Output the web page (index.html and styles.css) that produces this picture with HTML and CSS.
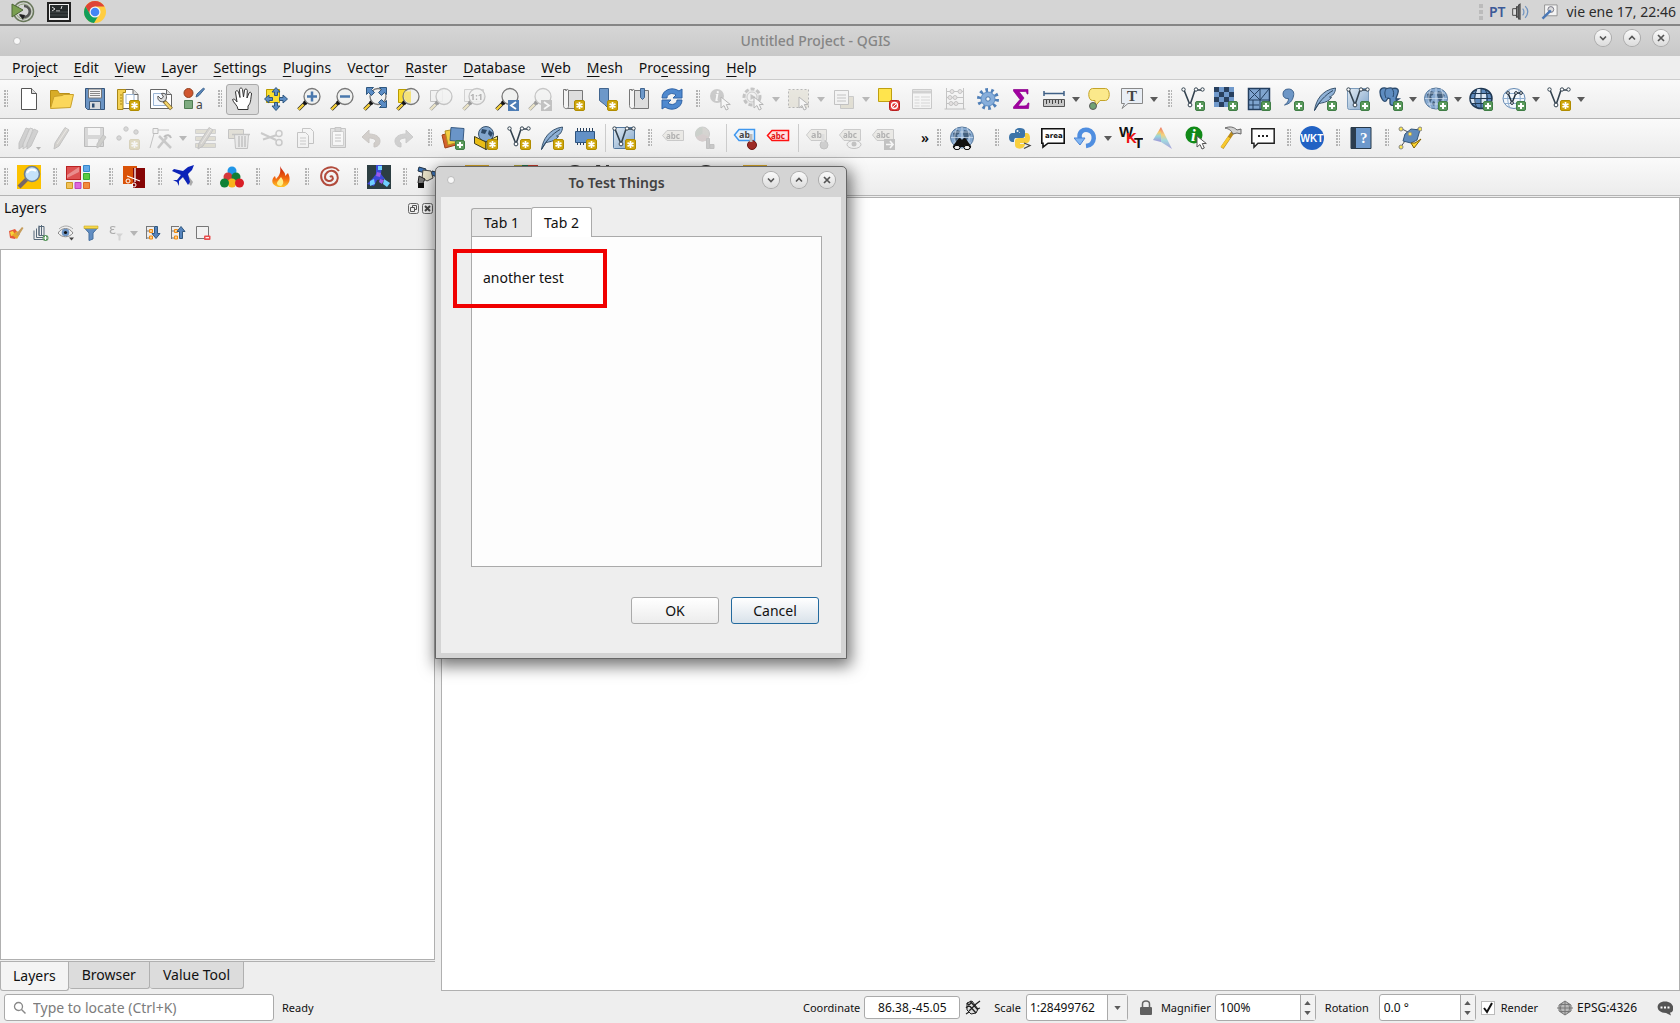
FILE: index.html
```html
<!DOCTYPE html>
<html lang="en">
<head>
<meta charset="utf-8">
<title>Untitled Project - QGIS</title>
<link rel="stylesheet" href="styles.css">
</head>
<body>
<svg class="defs" aria-hidden="true">
<defs>
<linearGradient id="gBlue" x1="0" y1="0" x2="1" y2="1"><stop offset="0" stop-color="#e4edf5"/><stop offset="1" stop-color="#7ea3c9"/></linearGradient>
<linearGradient id="gFire" x1="0" y1="0" x2="0" y2="1"><stop offset="0" stop-color="#c41708"/><stop offset=".6" stop-color="#f26a10"/><stop offset="1" stop-color="#ffc629"/></linearGradient>
<linearGradient id="gRain" x1="0" y1="0" x2="0" y2="1"><stop offset="0" stop-color="#e84030"/><stop offset=".35" stop-color="#f6c245"/><stop offset=".6" stop-color="#7fd0d8"/><stop offset="1" stop-color="#8a7bd0"/></linearGradient>
<g id="lens"><path d="M9 15l-7.500 7.500" stroke="#222" stroke-width="3.600"/><path d="M6.500 17.500l-5 5" stroke="#f5cf3a" stroke-width="2.400"/><path d="M9.500 14.500l-2 2" stroke="#111" stroke-width="4"/><circle cx="15" cy="9.500" r="8" fill="#eef0ee" fill-opacity=".85" stroke="#777" stroke-width="1.300"/></g>
<g id="plus"><rect x="14.500" y="14.500" width="9" height="9" rx="1.500" fill="#5a9a5c" stroke="#3f7d45"/><path d="M19 16v6M16 19h6" stroke="#fff" stroke-width="2"/></g>
<g id="star"><rect x="13.500" y="13.500" width="10" height="10" rx="1.500" fill="#cfa70c" stroke="#b08c00"/><path d="M18.500 15v7M15.500 16.700l6 3.600M21.500 16.700l-6 3.600" stroke="#fff" stroke-width="1.700"/></g>
<g id="vee"><path d="M3 3l6 15 5-15h7" fill="none" stroke="#33424f" stroke-width="1.600"/><g fill="#fff" stroke="#33424f"><circle cx="2.500" cy="2.500" r="1.700"/><circle cx="9" cy="18" r="1.900"/><circle cx="15" cy="2.500" r="1.700"/><circle cx="21.500" cy="2.500" r="1.700"/></g></g>
<g id="pointer"><path d="M12 10v11l3-2.500 2 4.500 2.300-1-2-4.500h4z" fill="#fff" stroke="#555"/></g>
<g id="feather"><path d="M1.500 23.500C3 13 9 3 22.500 1c0 5-3 8-6 9l2 .5c-2 3-6 5-10 5.500L6 16.500z" fill="#8fb1d6" stroke="#39536d"/><path d="M1.500 23.500C5 16 12 8 20 3.500" stroke="#2f4962" fill="none"/></g>
<g id="globe"><ellipse cx="12" cy="11.500" rx="11.500" ry="10.500" fill="#86a9d0" stroke="#58799c"/><path d="M3 7l4-3 3 1-1 3-2 1 1 3-2 4-2-4zM14 4l4 1 3 4-2 1-2 4-2 2-1-5-1-3zM9 14l2 1-1 4-2-2z" fill="#44607e"/><path d="M1 11.500h22M3 6h18M3 17h18M12 1v21M7 2c-3 6-3 13 0 19M17 2c3 6 3 13 0 19" stroke="#d5e3f0" stroke-width=".7" fill="none"/></g>
<g id="pencil"><path d="M5 17L15 1.500l4 2.500L9 20l-5 3z" fill="#aaa08c" stroke="#777"/><path d="M7 18L17 3" stroke="#ded6c4"/></g>
</defs>
<symbol id="new" viewBox="0 0 24 24"><path d="M4.500 1.500h10l5 5v16h-15z" fill="#fff" stroke="#555"/><path d="M14.500 1.500v5h5" fill="#ddd" stroke="#555"/></symbol>
<symbol id="open" viewBox="0 0 24 24"><path d="M.5 20.500v-17h7l2 3h10v3" fill="#d8ac27" stroke="#b98f17"/><path d="M.5 21.500L4 9.500l8-1 2-1h9.500l-3 13z" fill="#fbd75b" stroke="#c9a02a"/></symbol>
<symbol id="save" viewBox="0 0 24 24"><path d="M2.500 1.500h19v21h-17l-2-2z" fill="#6b94c4" stroke="#35557c"/><path d="M5.500 2h13v9h-13z" fill="#f3f3f3" stroke="#777"/><path d="M7 4.500h10M7 6.500h10M7 8.500h10" stroke="#888"/><path d="M6.500 14.500h11v8h-11z" fill="#d7dadd" stroke="#45607f"/><path d="M9 16.500h2.500v4H9z" fill="#2c4c70"/></symbol>
<symbol id="layout" viewBox="0 0 24 24"><path d="M4 2.500h13l5 5v14H4z" fill="#fff" stroke="#666"/><path d="M17 2.500v5h5" fill="#ddd" stroke="#666"/><path d="M10 7.500h8v9h-8z" fill="none" stroke="#9bb5d4"/><path d="M1.500 2.500h8v3H7v17H1.500z" fill="#f3d155" stroke="#a88718"/><path d="M4 8h2M4 11h2M4 14h2M4 17h2" stroke="#a88718"/><use href="#star"/></symbol>
<symbol id="manager" viewBox="0 0 24 24"><path d="M1.500 2.500h16l5 5v14h-21z" fill="#fff" stroke="#666"/><path d="M17.500 2.500v5h5" fill="#ddd" stroke="#666"/><path d="M4.500 6.500h12v12h-12z" fill="#f5f9ff" stroke="#9bb5d4"/><path d="M15 14l7.500 8" stroke="#876c2c" stroke-width="4"/><path d="M16 15l6 6.500" stroke="#f4d56a" stroke-width="2.500"/><path d="M9 9l3 3 2.500-2-2-3.500c4-1 6 2 4.500 6l-2 2c-4 1-7-1.500-6-5.500z" fill="#ddd" stroke="#555"/></symbol>
<symbol id="hand" viewBox="0 0 24 24"><path d="M7 22.500c0-4-5-7-5.500-10 1.500-1 3 0 4.500 2.500L4.500 5C5 3 7 3.500 7.500 5L9 10.500 8.500 2.500C9 .5 11 .5 11.500 2.500L12.500 10l1-7c.5-1.500 2.500-1.500 2.800.5L16 11l2-5c1-1.500 2.700-.5 2.500 1-1 6-.5 9-3.500 12v3.500z" fill="#fff" stroke="#333"/></symbol>
<symbol id="panto" viewBox="0 0 24 24"><path d="M2.500 2.500h13v13h-13z" fill="#fbdf2f" stroke="#b89b00"/><g fill="#5b8cc4" stroke="#2f577f"><path d="M12 .5l4 4.500h-2.500v3.500h-3V5H8zM12 23.500l4-4.500h-2.500v-3.500h-3V19H8zM.5 12L5 8v2.500h3.500v3H5V16zM23.500 12L19 8v2.500h-3.500v3H19V16z"/></g></symbol>
<symbol id="zin" viewBox="0 0 24 24"><use href="#lens"/><path d="M15 4.500v10M10 9.500h10" stroke="#4a78ad" stroke-width="2.500"/></symbol>
<symbol id="zout" viewBox="0 0 24 24"><use href="#lens"/><path d="M10 9.500h10" stroke="#4a78ad" stroke-width="2.500"/></symbol>
<symbol id="zfull" viewBox="0 0 24 24"><use href="#lens"/><g fill="#5b8cc4" stroke="#2f577f"><path d="M3.500.5h7l-2 2 3 3-3 3-3-3-2 2zM23.500.5h-7l2 2-3 3 3 3 3-3 2 2zM23.500 20.500h-7l2-2-3-3 3-3 3 3 2-2z"/></g></symbol>
<symbol id="zsel" viewBox="0 0 24 24"><path d="M2.500 2.500h12v13h-12z" fill="#f9dc35" stroke="#b89b00"/><use href="#lens"/><path d="M9 4.500h6v11h-3c-4-2-5-7-3-11z" fill="#f4e27a"/></symbol>
<symbol id="zlayer" viewBox="0 0 24 24"><path d="M1.500 3.500h12v11h-12z" fill="#eee" stroke="#777"/><use href="#lens"/></symbol>
<symbol id="zlast" viewBox="0 0 24 24"><use href="#lens"/><path d="M13 13h11v11H13z" fill="#4d7db5"/><path d="M21 15l-5 3.500 5 3.500" stroke="#fff" stroke-width="1.800" fill="none"/></symbol>
<symbol id="znext" viewBox="0 0 24 24"><use href="#lens"/><path d="M13 13h11v11H13z" fill="#777"/><path d="M16 15l5 3.500-5 3.500" stroke="#fff" stroke-width="1.800" fill="none"/></symbol>
<symbol id="mapview" viewBox="0 0 24 24"><path d="M5 3.500h16.500v18H5z" fill="#dedede" stroke="#777"/><path d="M5 2.500H2.500v16c0 4 5 4 5 1v-16C7.500 2 5 2 5 4z" fill="#f4f4f4" stroke="#777"/><use href="#star"/></symbol>
<symbol id="bookmark" viewBox="0 0 24 24"><path d="M5.500 1.500h9v20l-4-4-5-4z" fill="#6d98c9" stroke="#41658f"/><use href="#star"/></symbol>
<symbol id="bookmarks" viewBox="0 0 24 24"><path d="M5 3.500h16.500v18H5z" fill="#dedede" stroke="#777"/><path d="M5 2.500H2.500v16c0 4 5 4 5 1v-16C7.500 2 5 2 5 4z" fill="#f4f4f4" stroke="#777"/><path d="M13.500 1.500h4v9l-2 2-2-2z" fill="#6d98c9" stroke="#41658f"/></symbol>
<symbol id="refresh" viewBox="0 0 24 24"><path d="M2 11C2 3 12-1 19 4l3-2v9h-9l3-3c-4-3-9-1-9 3z" fill="#4f89cf" stroke="#2e62a5"/><path d="M22 13c0 8-10 12-17 7l-3 2v-9h9l-3 3c4 3 9 1 9-3z" fill="#4f89cf" stroke="#2e62a5"/></symbol>
<symbol id="action" viewBox="0 0 24 24"><circle cx="10" cy="10" r="8" fill="#ddd" stroke="#777" stroke-width="3" stroke-dasharray="4 2"/><circle cx="10" cy="10" r="5" fill="#eee" stroke="#888"/><path d="M8.500 7v6l5-3z" fill="#777"/><use href="#pointer"/></symbol>
<symbol id="select" viewBox="0 0 24 24"><path d="M1.500 2.500h20v18h-20z" fill="#d8cfa6" stroke="#555" stroke-dasharray="2 2"/><use href="#pointer"/></symbol>
<symbol id="selform" viewBox="0 0 24 24"><path d="M8.500 9.500h13v12h-13z" fill="#cfc18a" stroke="#888"/><path d="M2.500 3.500h14v14h-14z" fill="#f3f3f3" stroke="#777"/><path d="M5 8h9M5 11h9M5 14h9" stroke="#777"/></symbol>
<symbol id="deselect" viewBox="0 0 24 24"><path d="M1.500 1.500h13v13h-13z" fill="#ffe44d" stroke="#bfa010"/><rect x="12.500" y="13.500" width="10" height="10" rx="2" fill="#e23d3d" stroke="#b81d1d"/><circle cx="17.500" cy="18.500" r="3" fill="none" stroke="#fff" stroke-width="1.300"/><path d="M15.500 20.500l4-4" stroke="#fff"/></symbol>
<symbol id="table" viewBox="0 0 24 24"><path d="M2.500 2.500h19v19h-19z" fill="#fafafa" stroke="#888"/><path d="M3 5h18" stroke="#999" stroke-width="3"/><path d="M4.500 10h5M11 10h9M4.500 13h5M11 13h9M4.500 16h5M11 16h9M4.500 19h5M11 19h9" stroke="#aaa"/></symbol>
<symbol id="abacus" viewBox="0 0 24 24"><path d="M3.500 1v21M20.500 1v21M1.500 22h21M4 4.500h16M4 10.500h16M4 16.500h16" stroke="#777" fill="none"/><g fill="#d5c5c5" stroke="#777"><circle cx="9" cy="4.500" r="2"/><circle cx="17" cy="4.500" r="2"/><circle cx="7" cy="10.500" r="2"/><circle cx="12" cy="10.500" r="2"/><circle cx="8" cy="16.500" r="2"/><circle cx="13" cy="16.500" r="2"/></g></symbol>
<symbol id="gear" viewBox="0 0 24 24"><circle cx="12" cy="12" r="9" fill="none" stroke="#4f7fb8" stroke-width="4" stroke-dasharray="2.600 3.050"/><circle cx="12" cy="12" r="7" fill="#87aedb" stroke="#5c8cc2"/><circle cx="12" cy="12" r="2.200" fill="#f5f5f5" stroke="#4878ae"/></symbol>
<symbol id="sigma" viewBox="0 0 24 24"><path d="M4.500 2.500h14.500v4.500h-1c0-2-1-2.500-3-2.500h-5L15 11l-6 8h6c2 0 3.500-1 4-3h1l-.5 5.500h-15v-1.500L11 12.500 4.500 4z" fill="#a100a1" stroke="#8a008a" stroke-width=".7"/></symbol>
<symbol id="measure" viewBox="0 0 24 24"><path d="M2 6.500h20M2 4v5M22 4v5" stroke="#3e5f85" stroke-width="1.500"/><path d="M1.500 12.500h21v7h-21z" fill="#c8c8c8" stroke="#555"/><path d="M4.500 13v4M7.500 13v3M10.500 13v4M13.500 13v3M16.500 13v4M19.500 13v3" stroke="#444"/></symbol>
<symbol id="tips" viewBox="0 0 24 24"><path d="M5.500 1.500h13c5 0 5 12 0 12H13l-5 6v-6H5.500c-5 0-5-12 0-12z" fill="#fbe98b" stroke="#c4a42a"/><circle cx="6" cy="19" r="3.500" fill="#71a174" stroke="#5b5b5b"/></symbol>
<symbol id="addvec" viewBox="0 0 24 24"><use href="#vee"/><use href="#plus"/></symbol>
<symbol id="newvec" viewBox="0 0 24 24"><use href="#vee"/><use href="#star"/></symbol>
<symbol id="addras" viewBox="0 0 24 24"><path d="M0 0h20v20H0z" fill="#7099cb"/><path d="M0 0h5v5H0zM10 0h5v5h-5zM5 5h5v5H5zM15 5h5v5h-5zM10 10h5v5h-5zM0 10h5v5H0zM5 15h5v5H5z" fill="#28405f"/><use href="#plus"/></symbol>
<symbol id="addmesh" viewBox="0 0 24 24"><path d="M1.500 1.500h21v21h-21z" fill="#7fa4cf" stroke="#243f5f" stroke-width="1.500"/><path d="M13 1v22M1 13h22M2 2l11 11M13 2L2 13M22 2L13 13M1 18h11M6 13v10" stroke="#243f5f"/><use href="#plus"/></symbol>
<symbol id="addcsv" viewBox="0 0 24 24"><path d="M8.500 2c4 0 6 3 5 7-1 5-4 8-9 9 3-2 4-4 4-6.500C5 12 3 10 3 7c0-3 2-5 5.500-5z" fill="#6d96c6" stroke="#41658f"/><use href="#plus"/></symbol>
<symbol id="addlite" viewBox="0 0 24 24"><use href="#feather"/><use href="#plus"/></symbol>
<symbol id="newlite" viewBox="0 0 24 24"><use href="#feather"/><use href="#star"/></symbol>
<symbol id="addvirt" viewBox="0 0 24 24"><rect x="1.500" y="1.500" width="21" height="21" rx="2" fill="url(#gBlue)" stroke="#7d9cbc"/><use href="#vee"/><use href="#plus"/></symbol>
<symbol id="newvirt" viewBox="0 0 24 24"><rect x="1.500" y="1.500" width="21" height="21" rx="1" fill="url(#gBlue)" stroke="#53779d"/><use href="#vee"/><use href="#star"/></symbol>
<symbol id="addpg" viewBox="0 0 24 24"><path d="M1 5c0-4 4-5 7-3.500C11 .5 13 1 14 1.500c4-1 6 1 5 4-.5 3-2 4.500-2 6.500h3l-3 2-1 3c-1 2-5 2-5-1v-4l-2-1-2 3c-3 2-6-5-6-9z" fill="#5e8cc0" stroke="#29496c" stroke-width="1.300"/><path d="M7 2c-2 4-1 6 0 9M13 2c2 2 2 5 1 8" stroke="#29496c" fill="none"/><use href="#plus"/></symbol>
<symbol id="addwms" viewBox="0 0 24 24"><use href="#globe"/><use href="#plus"/></symbol>
<symbol id="addwcs" viewBox="0 0 24 24"><ellipse cx="12" cy="11.500" rx="11" ry="10" fill="#5e8abc" stroke="#1f3853" stroke-width="1.500"/><path d="M7 7h10v4.500H6zM1.500 12H6l1 4.500H3zM12 12h5v4.500h-5zM8 2h4v4.500H7z" fill="#d8e5f3"/><path d="M1 11.500h22M3 6.500h18M3 16.500h18M12 2v19M8 2c-3 6-3 13 0 19M16 2c3 6 3 13 0 19" stroke="#1f3853" fill="none"/><use href="#plus"/></symbol>
<symbol id="addwfs" viewBox="0 0 24 24"><ellipse cx="12" cy="11.500" rx="11" ry="10" fill="#f2f7fc" stroke="#6489b2"/><path d="M1 11.500h22M3 6.500h18M3 16.500h18M8 2c-3 6-3 13 0 19M16 2c3 6 3 13 0 19" stroke="#91afd0" fill="none"/><path d="M6 6l4 10 4-10h5" stroke="#1f2e3c" stroke-width="1.500" fill="none"/><g fill="#fff" stroke="#1f2e3c"><circle cx="6" cy="6" r="1.400"/><circle cx="10" cy="16" r="1.400"/><circle cx="14" cy="6" r="1.400"/><circle cx="19" cy="6" r="1.400"/></g><use href="#plus"/></symbol>
<symbol id="edits" viewBox="0 0 24 24"><path d="M2 17L9 2l3 1-6 17-4 3z" fill="#999" stroke="#777"/><path d="M6 18L13 2l3 1-6 17-4 3z" fill="#bbb" stroke="#777"/><path d="M10 18L17 3l4 2-7 15-4 3z" fill="#999" stroke="#777"/><path d="M19 21h5l-2.500 3z" fill="#555"/></symbol>
<symbol id="edit" viewBox="0 0 24 24"><use href="#pencil"/></symbol>
<symbol id="saveedit" viewBox="0 0 24 24"><path d="M1.500 1.500h19v19h-19z" fill="#aaa" stroke="#666"/><path d="M5 2h12v7H5zM5 13h10v7H5z" fill="#f4f4f4"/><path d="M14 18l6-9 3 2-6 9-3 2z" fill="#998" stroke="#777"/></symbol>
<symbol id="addpt" viewBox="0 0 24 24"><g fill="#aaa" stroke="#777"><circle cx="3" cy="12" r="2.200"/><circle cx="10" cy="3" r="2.200"/><circle cx="20" cy="6" r="2.200"/></g><g opacity=".8"><use href="#star"/></g></symbol>
<symbol id="vertex" viewBox="0 0 24 24"><path d="M1 22L6 4h14" stroke="#777" fill="none"/><path d="M4 2.500h5v5H4z" fill="#eee" stroke="#666"/><path d="M9 22l9-11M22 22L10 10" stroke="#888" stroke-width="2.500"/><path d="M15 11c3-3 6-2 7 1" stroke="#666" stroke-width="2" fill="none"/></symbol>
<symbol id="multi" viewBox="0 0 24 24"><path d="M1.500 3.500h20v4h-20zM1.500 10.500h20v4h-20zM1.500 17.500h20v4h-20z" fill="#c9bd83" stroke="#999"/><use href="#pencil"/></symbol>
<symbol id="trash" viewBox="0 0 24 24"><path d="M1.500 3.500h15v9h-15z" fill="#c9bd93" stroke="#777"/><path d="M7.500 8.500h14l-1 14h-12z" fill="#ddd" stroke="#777"/><path d="M5 8.500h18M12 10v11M15 10v11M18 10v11" stroke="#777" stroke-width="1.500"/></symbol>
<symbol id="cut" viewBox="0 0 24 24"><path d="M1 7l15 7M3 13.500L17 9" stroke="#888" stroke-width="2"/><circle cx="19" cy="7.500" r="3" fill="none" stroke="#888" stroke-width="1.500"/><circle cx="19" cy="16.500" r="3" fill="none" stroke="#888" stroke-width="1.500"/></symbol>
<symbol id="copy" viewBox="0 0 24 24"><path d="M9.500 2.500h8l3 3v12h-11z" fill="#f4f4f4" stroke="#777"/><path d="M4.500 6.500h8l3 3v12h-11z" fill="#f4f4f4" stroke="#777"/><path d="M7 12h6M7 15h6M7 18h6" stroke="#888"/></symbol>
<symbol id="paste" viewBox="0 0 24 24"><path d="M4.500 2.500h15v19h-15z" fill="#ccc" stroke="#777"/><path d="M6.500 5.500h11v14h-11z" fill="#fff" stroke="#999"/><path d="M9 1.500h6v4H9z" fill="#aaa" stroke="#777"/><path d="M9 9h6M9 12h6M9 15h6" stroke="#777"/></symbol>
<symbol id="undo" viewBox="0 0 24 24"><path d="M3 11l7-7v4c7 0 11 3 11 7s-3 6-6 6v-4c3-1 2-5-5-5v5z" fill="#a79381" stroke="#8f7e70"/></symbol>
<symbol id="redo" viewBox="0 0 24 24"><path d="M21 11l-7-7v4c-7 0-11 3-11 7s3 6 6 6v-4c-3-1-2-5 5-5v5z" fill="#999" stroke="#888"/></symbol>
<symbol id="dsm" viewBox="0 0 24 24"><path d="M1 9l10-3 4 13-11 3z" fill="#d5632c" stroke="#9b4118"/><path d="M4 5l11-2 3 13-11 3z" fill="#f2cf43" stroke="#b0901f"/><path d="M10 1.500l13 1-1 13-13-1z" fill="#6a95c8" stroke="#385b84"/><use href="#plus"/></symbol>
<symbol id="gpkg" viewBox="0 0 24 24"><circle cx="12" cy="8" r="7.500" fill="#83a6cd" stroke="#38536e"/><path d="M8 3l5 1-2 4-4-1zM15 4l4 3-2 4-3-3z" fill="#2d4865"/><path d="M.5 10.500L12 16v7.500l-11.500-6z" fill="#e9bd16" stroke="#3b3b20"/><path d="M12 16l11.500-6v8L12 23.500z" fill="#fbe660" stroke="#3b3b20"/><use href="#star"/></symbol>
<symbol id="chip" viewBox="0 0 24 24"><path d="M4.500 2v17M7.500 2v17M10.500 2v17M13.500 2v17M16.500 2v17M19.500 2v17" stroke="#243e5c"/><path d="M2.500 5.500h19v11h-19z" fill="#6290c6" stroke="#2f5580"/><use href="#star"/></symbol>
<symbol id="diag" viewBox="0 0 24 24"><circle cx="8.500" cy="8" r="7" fill="#a7a08f" stroke="#888"/><path d="M8.500 8V1A7 7 0 0 0 2 11z" fill="#7f9a80"/><path d="M8.500 8L2 11a7 7 0 0 0 13 0z" fill="#b98f8f"/><path d="M12.500 12.500h3v10h-3zM16 18.500h4v4h-4z" fill="#888" stroke="#777"/></symbol>
<symbol id="metasearch" viewBox="0 0 24 24"><use href="#globe"/><path d="M8 13c1-2 3-1 4 1 1-2 3-3 4-1l5 7c1 3-5 5-7 1h-4c-2 4-8 2-7-1z" fill="#111"/><ellipse cx="7" cy="21.500" rx="3" ry="2.200" fill="#eee" stroke="#000"/><ellipse cx="17" cy="21.500" rx="3" ry="2.200" fill="#eee" stroke="#000"/></symbol>
<symbol id="python" viewBox="0 0 24 24"><path d="M7 10V5c0-4 10-4 10 0v4c0 3-2 3-4 3H8c-2 0-2 2-2 4H4c-4 0-4-9 0-9h8V6z" fill="#3d74a8"/><path d="M17 12V7h2c4 0 4 10 0 10h-7v1h5c0 6-10 6-10 1v-4c0-2 2-3 4-3z" fill="#f8cf3e"/><circle cx="9.500" cy="5" r="1" fill="#fff"/><path d="M16 17l6 2.500-6 3" stroke="#444" fill="none" stroke-width="1.300"/></symbol>
<symbol id="rotate" viewBox="0 0 24 24"><path d="M6 13C4 6 9 3 14 4c8 2 8 15-2 16" stroke="#4f8ee0" stroke-width="4.500" fill="none"/><path d="M0 12h11l-5 7z" fill="#80b5f2" stroke="#4a84d5"/></symbol>
<symbol id="prism" viewBox="0 0 24 24"><path d="M9 1L1 14l8 2z" fill="url(#gRain)" opacity=".8"/><path d="M9 1l11 22-11-7z" fill="url(#gRain)" opacity=".7"/></symbol>
<symbol id="hammer" viewBox="0 0 24 24"><path d="M4 22L15 6" stroke="#b98a1c" stroke-width="3.500"/><path d="M4 21.500l7-10" stroke="#f8c92f" stroke-width="3"/><path d="M7 2c5-2 9-1 12 2l4-1v5l-4-1-4 1c-2-4-4-5-8-6z" fill="#d2d2d2" stroke="#666"/></symbol>
<symbol id="dots" viewBox="0 0 24 24"><path d="M.8 2.800h22.400v14.400H7l-4 4v-4H.8z" fill="#fff" stroke="#222" stroke-width="1.500"/><path d="M7 10h2M11 10h2M15 10h2" stroke="#222" stroke-width="2"/></symbol>
<symbol id="topo" viewBox="0 0 24 24"><path d="M2 2l10 5L22 2M2 22L12 8l9-5" stroke="#555" fill="none"/><path d="M7 8l6-5 9 1-3 10-6 3-8-2z" fill="#5e8abb" stroke="#34577c"/><g fill="#fde84e" stroke="#888"><circle cx="3" cy="3" r="2"/><circle cx="22" cy="3" r="2"/><circle cx="12" cy="8" r="2"/><circle cx="3" cy="21" r="2"/></g><path d="M13 17l3 5 7-9-6 4z" fill="#ffd72e" stroke="#7d5e00"/></symbol>
<symbol id="p1" viewBox="0 0 24 24"><path d="M0 0h24v24H0z" fill="#fcc200"/><path d="M10 14l-8 8" stroke="#766" stroke-width="4"/><circle cx="15" cy="9" r="7.500" fill="#c5e2fb" stroke="#71808f" stroke-width="1.600"/><path d="M10 8c2-4 6-4 9-2" stroke="#fff" stroke-width="2" fill="none"/></symbol>
<symbol id="p2" viewBox="0 0 24 24"><rect x=".5" y="1.500" width="14" height="13" fill="#dd5151" stroke="#b22"/><path d="M17.500.5h6v6h-6z" fill="#63a8e8" stroke="#38c"/><path d="M17.500 8.500h6v6h-6z" fill="#5bcb40" stroke="#3a3"/><path d="M.5 17.500h6v6h-6z" fill="#f1c157" stroke="#c92"/><path d="M9 17.500h6v6H9z" fill="#dd69dd" stroke="#b4b"/><path d="M17.500 17.500h6v6h-6z" fill="#f18a3c" stroke="#d62"/><path d="M1 10L13 2v5L1 13z" fill="#fff" opacity=".35"/></symbol>
<symbol id="p3" viewBox="0 0 24 24"><path d="M1 1h14v18H1z" fill="#da5207"/><path d="M11 3h12v20H11z" fill="#860505"/><path d="M13 3v14M5 11l13 5" stroke="#fff" stroke-width="1.300"/><circle cx="6" cy="16" r="2" stroke="#fff" fill="none"/><circle cx="12" cy="20" r="2" stroke="#fff" fill="none"/></symbol>
<symbol id="p4" viewBox="0 0 24 24"><path d="M9 10l11 11 2-4-6-8z" fill="#aaa"/><path d="M1 6l2-2 9 2 5-4 6-2-2 5-4 4 2 8-2 3-5-8-4 4v5l-2-4-4-2h4l4-5z" fill="#0c23b8"/></symbol>
<symbol id="p5" viewBox="0 0 24 24"><circle cx="12" cy="6" r="4.500" fill="#2196e8"/><circle cx="8" cy="12" r="4.500" fill="#d5383a"/><circle cx="16" cy="12" r="4.500" fill="#127d35"/><circle cx="12" cy="18" r="4.500" fill="#f9b31a"/><circle cx="4.500" cy="18" r="4.500" fill="#108236"/><circle cx="19.500" cy="18" r="4.500" fill="#d91f26"/></symbol>
<symbol id="p6" viewBox="0 0 24 24"><path d="M11 1c2 5 6 6 5 10l3-3c3 6 2 11-4 14H9C2 20 2 14 6 11l1 3c4-4 5-7 4-13z" fill="url(#gFire)"/><path d="M12 12c3 4 3 7 0 9-4 0-5-3-3-5z" fill="#fff08a"/></symbol>
<symbol id="p7" viewBox="0 0 24 24"><path d="M12 12c2-2 4 1 2 3s-7 1-7-3 4-7 8-6 6 6 4 10-9 6-13 2-4-11 1-14 11-2 14 2" fill="none" stroke="#b24b3c" stroke-width="2"/></symbol>
<symbol id="p8" viewBox="0 0 24 24"><path d="M0 0h24v24H0z" fill="#2c3e42"/><path d="M9 0h6l-1 9 4 5-8 1-3 6-7-2 6-6 3-4z" fill="#3b49d8"/><path d="M11 1h4v4h-4zM3 16l4-2 1 5-5 2zM17 14l6 4-3 4-4-3z" fill="#6fd0ff"/><path d="M10 7l4 1-1 4-4-1zM13 14l4 1-2 4-3-2z" fill="#9a5be8"/></symbol>
<symbol id="p9" viewBox="0 0 24 24"><path d="M3 2l7 2-1 4-7-2zM16 6l7 2-1 4-7-2z" fill="#3c74b8" stroke="#234"/><path d="M7 5l8 1 2 7-6 3-5-3z" fill="#e8e2c8" stroke="#444"/><path d="M3 11l6 3-3 6-4-2z" fill="#777" stroke="#222"/><path d="M2 18h6v5H2z" fill="#111"/></symbol>
<symbol id="p10" viewBox="0 0 24 24"><path d="M0 0h24v24H0z" fill="#d9a929"/></symbol>
<symbol id="p11" viewBox="0 0 24 24"><path d="M0 0h8v24H0z" fill="#b2a43c"/><path d="M8 0h6v24H8z" fill="#27724a"/><path d="M14 0h10v24H14z" fill="#c43b2a"/></symbol>
<symbol id="p12" viewBox="0 0 24 24"><circle cx="12" cy="12" r="12" fill="#333"/></symbol>
<symbol id="p13" viewBox="0 0 24 24"><path d="M0 0h4l3 8H2zM10 0h3v8h-3z" fill="#444"/></symbol>
<symbol id="l1" viewBox="0 0 16 16"><path d="M1 6l6-2 4 5-4 5-5-1z" fill="#e55a3c"/><path d="M2 7l3-1 2 4-4 1z" fill="#f9d53b"/><path d="M4 10l5 4 3-5-3-3z" fill="#e8a82b"/><path d="M8 9l6-7 1.500 1-5 8z" fill="#c69d5c"/></symbol>
<symbol id="l2" viewBox="0 0 16 16"><path d="M1 5.500v9h9M3.500 3.500v9h9M6 .5v10M6 1.500h5v9H6zM8.500 0v10" fill="none" stroke="#57697a"/><circle cx="12.500" cy="13" r="3" fill="#58965c"/><path d="M12.500 11v4M10.500 13h4" stroke="#fff"/></symbol>
<symbol id="l3" viewBox="0 0 16 16"><path d="M0 8c4-6 11-6 15 0-4 5-11 5-15 0z" fill="#f0f0f0" stroke="#888"/><circle cx="7.500" cy="7.500" r="3.800" fill="#6d94c4"/><circle cx="7.500" cy="7.500" r="1.600" fill="#111"/><path d="M1 4c4-4 10-4 14 0" stroke="#aaa" fill="none"/><path d="M11 12.500h5l-2.500 3z" fill="#444"/></symbol>
<symbol id="l4" viewBox="0 0 16 16"><path d="M1.500 3h13L10 8v6l-4 1.500V8z" fill="#618dc2" stroke="#47719f"/><path d="M1 1h14v2.500H1z" fill="#f5d84c" stroke="#c9a920" stroke-width=".6"/></symbol>
<symbol id="l6" viewBox="0 0 16 16"><path d="M1.500 1v13M1 1.500h8M1.500 6h3M1.500 13h3" stroke="#777" fill="none"/><path d="M4.500 4.500h3v3h-3zM4.500 11h3v3h-3z" fill="#ffd089" stroke="#f08b12"/><path d="M9.500 1.500h3v7h2.500l-4 5-4-5h2.500z" fill="#5684bd" stroke="#31587f"/></symbol>
<symbol id="l7" viewBox="0 0 16 16"><path d="M1.500 1v13M1 1.500h8M1.500 6h3M1.500 13h3" stroke="#777" fill="none"/><path d="M4.500 4.500h3v3h-3zM4.500 11h3v3h-3z" fill="#ffd089" stroke="#f08b12"/><path d="M9.500 13.500h3v-7H15l-4-5-4 5h2.500z" fill="#5684bd" stroke="#31587f"/></symbol>
<symbol id="l8" viewBox="0 0 16 16"><path d="M1.500 1.500h12v12h-12z" fill="#f2f2f2" stroke="#777"/><rect x="9" y="10.500" width="6.500" height="4.500" rx="1" fill="#e94c4c"/><path d="M10.500 12.700h3.500" stroke="#fff" stroke-width="1.200"/></symbol>
<symbol id="tri" viewBox="0 0 8 5"><path d="M0 0h8L4 5z" fill="#5b5b5b"/></symbol>
<symbol id="triup" viewBox="0 0 8 5"><path d="M0 5h8L4 0z" fill="#5b5b5b"/></symbol>
<symbol id="wmin" viewBox="0 0 16 16"><path d="M5 6.500l3 3 3-3" fill="none" stroke="#555" stroke-width="1.600"/></symbol>
<symbol id="wmax" viewBox="0 0 16 16"><path d="M5 9.500l3-3 3 3" fill="none" stroke="#555" stroke-width="1.600"/></symbol>
<symbol id="wclose" viewBox="0 0 16 16"><path d="M5 5l6 6M11 5l-6 6" fill="none" stroke="#555" stroke-width="1.700"/></symbol>
</svg>

<header class="panel">
  <svg class="ic" viewBox="0 0 24 24"><circle cx="12.500" cy="11.500" r="10" fill="none" stroke="#69785b" stroke-width="1.500"/><circle cx="12.500" cy="11.500" r="7.500" fill="none" stroke="#8fa07c"/><path d="M13 6a5.500 5.500 0 1 1-4 9" fill="none" stroke="#555" stroke-width="2.500"/><path d="M1 4l11 6L1 17z" fill="#7a9f50" stroke="#4d6637"/><path d="M8 14l4 6 2-5z" fill="#222"/></svg>
  <svg class="ic" viewBox="0 0 24 24"><path d="M1 3h22v18H1z" fill="#eee" stroke="#222" stroke-width="2"/><path d="M3 5h18v13H3z" fill="#252a2b"/><path d="M5 7l3 2-3 2M9 11h4M14 9l1-3" stroke="#ddd" fill="none"/><path d="M3 15h18M3 12h18" stroke="#454b4d"/></svg>
  <svg class="ic" viewBox="0 0 24 24"><circle cx="12" cy="12" r="11" fill="#ffcd40"/><path d="M2.500 6.500A11 11 0 0 1 21.500 6.500H12l-5 8z" fill="#de4437"/><path d="M2.500 6.500L7.500 15l8 .5-4.500 7.500A11 11 0 0 1 2.500 6.500z" fill="#129e5b"/><circle cx="12" cy="12" r="5.500" fill="#f4f4f4"/><circle cx="12" cy="12" r="4.300" fill="#4385f4"/></svg>
  <div class="tray">
    <i class="blocks"></i><b class="kbd">PT</b>
    <svg class="ic vol" viewBox="0 0 24 24"><path d="M2 8h4l5-6v19l-5-5H2z" fill="#ddd" stroke="#333"/><path d="M7 5v14M9.500 3v18" stroke="#444" stroke-width="2"/><path d="M14 8c2 2 2 6 0 8M17 5c4 4 4 9 0 14" stroke="#6f93c0" stroke-width="1.500" fill="none"/></svg>
    <svg class="ic pad" viewBox="0 0 24 24"><path d="M5.500 3.500h15v13h-15z" fill="#f4f4f4" stroke="#888"/><circle cx="13" cy="9" r="3.500" fill="#ddd" stroke="#667"/><path d="M13 10L3 20" stroke="#4b78b5" stroke-width="3"/></svg>
    <time>vie ene 17, 22:46</time>
  </div>
</header>

<div class="titlebar"><i class="pin"></i><h1>Untitled Project - QGIS</h1>
  <div class="wbtns"><button aria-label="Minimize"><svg><use href="#wmin"/></svg></button><button aria-label="Maximize"><svg><use href="#wmax"/></svg></button><button aria-label="Close"><svg><use href="#wclose"/></svg></button></div>
</div>

<nav class="menubar"><button>Pro<u>j</u>ect</button><button><u>E</u>dit</button><button><u>V</u>iew</button><button><u>L</u>ayer</button><button><u>S</u>ettings</button><button><u>P</u>lugins</button><button>Vect<u>o</u>r</button><button><u>R</u>aster</button><button><u>D</u>atabase</button><button><u>W</u>eb</button><button><u>M</u>esh</button><button>Pro<u>c</u>essing</button><button><u>H</u>elp</button></nav>

<div class="tools">
  <div class="group"><button aria-label="New"><svg><use href="#new"/></svg></button><button aria-label="Open"><svg><use href="#open"/></svg></button><button aria-label="Save"><svg><use href="#save"/></svg></button><button aria-label="New layout"><svg><use href="#layout"/></svg></button><button aria-label="Layout manager"><svg><use href="#manager"/></svg></button><button aria-label="Style manager"><svg viewBox="0 0 24 24"><circle cx="6.500" cy="6" r="4.500" fill="#d0562f" stroke="#93401f"/><path d="M2.500 13.500h8v8h-8z" fill="#7eab80" stroke="#4f7d52"/><path d="M14 10l1-3 6.500-6 1 1-5.500 6.500z" fill="#5c8ac0" stroke="#3e658f"/><text x="14" y="22" class="glyph" font-size="12">a</text></svg></button></div>
  <div class="group"><button class="on" aria-label="Pan"><svg><use href="#hand"/></svg></button><button aria-label="Pan to selection"><svg><use href="#panto"/></svg></button><button aria-label="Zoom in"><svg><use href="#zin"/></svg></button><button aria-label="Zoom out"><svg><use href="#zout"/></svg></button><button aria-label="Zoom full"><svg><use href="#zfull"/></svg></button><button aria-label="Zoom to selection"><svg><use href="#zsel"/></svg></button><button disabled aria-label="Zoom to layer"><svg><use href="#zlayer"/></svg></button><button disabled aria-label="Native zoom"><svg viewBox="0 0 24 24"><path d="M2.500 2.500h19v12h-19z" fill="#eee" stroke="#999"/><use href="#lens"/><text x="8" y="13" class="glyph" font-size="9" font-weight="bold">1:1</text></svg></button><button aria-label="Zoom last"><svg><use href="#zlast"/></svg></button><button disabled aria-label="Zoom next"><svg><use href="#znext"/></svg></button><button aria-label="New map view"><svg><use href="#mapview"/></svg></button><button aria-label="New bookmark"><svg><use href="#bookmark"/></svg></button><button aria-label="Bookmarks"><svg><use href="#bookmarks"/></svg></button><button aria-label="Refresh"><svg><use href="#refresh"/></svg></button></div>
  <div class="group"><button disabled aria-label="Identify"><svg viewBox="0 0 24 24"><circle cx="8" cy="9" r="7" fill="#888"/><text x="6" y="14" fill="#fff" class="serif" font-style="italic" font-size="14">i</text><use href="#pointer"/></svg></button><button disabled aria-label="Run action"><svg><use href="#action"/></svg></button><button disabled class="drop" aria-label="Actions"><svg><use href="#tri"/></svg></button><button disabled aria-label="Select"><svg><use href="#select"/></svg></button><button disabled class="drop" aria-label="Select options"><svg><use href="#tri"/></svg></button><button disabled aria-label="Select by form"><svg><use href="#selform"/></svg></button><button disabled class="drop" aria-label="Select by options"><svg><use href="#tri"/></svg></button><button aria-label="Deselect"><svg><use href="#deselect"/></svg></button><button disabled aria-label="Attribute table"><svg><use href="#table"/></svg></button><button disabled aria-label="Field calculator"><svg><use href="#abacus"/></svg></button><button aria-label="Toolbox"><svg><use href="#gear"/></svg></button><button aria-label="Statistics"><svg><use href="#sigma"/></svg></button><button aria-label="Measure"><svg><use href="#measure"/></svg></button><button class="drop" aria-label="Measure options"><svg><use href="#tri"/></svg></button><button aria-label="Map tips"><svg><use href="#tips"/></svg></button><button aria-label="Text annotation"><svg viewBox="0 0 24 24"><path d="M1.500 1.500h21v15H8l-6 5 2.500-5h-3z" fill="#e9eef5" stroke="#888"/><text x="7" y="14" class="serif" font-size="15" fill="#444">T</text></svg></button><button class="drop" aria-label="Annotation options"><svg><use href="#tri"/></svg></button></div>
  <div class="group"><button aria-label="Add vector"><svg><use href="#addvec"/></svg></button><button aria-label="Add raster"><svg><use href="#addras"/></svg></button><button aria-label="Add mesh"><svg><use href="#addmesh"/></svg></button><button aria-label="Add delimited text"><svg><use href="#addcsv"/></svg></button><button aria-label="Add SpatiaLite"><svg><use href="#addlite"/></svg></button><button aria-label="Add virtual layer"><svg><use href="#addvirt"/></svg></button><button aria-label="Add PostGIS"><svg><use href="#addpg"/></svg></button><button class="drop" aria-label="Database options"><svg><use href="#tri"/></svg></button><button aria-label="Add WMS"><svg><use href="#addwms"/></svg></button><button class="drop" aria-label="WMS options"><svg><use href="#tri"/></svg></button><button aria-label="Add WCS"><svg><use href="#addwcs"/></svg></button><button aria-label="Add WFS"><svg><use href="#addwfs"/></svg></button><button class="drop" aria-label="WFS options"><svg><use href="#tri"/></svg></button><button aria-label="New shapefile"><svg><use href="#newvec"/></svg></button><button class="drop" aria-label="New layer options"><svg><use href="#tri"/></svg></button></div>
</div>

<div class="tools">
  <div class="group"><button disabled aria-label="Current edits"><svg><use href="#edits"/></svg></button><button disabled aria-label="Toggle editing"><svg><use href="#edit"/></svg></button><button disabled aria-label="Save edits"><svg><use href="#saveedit"/></svg></button><button disabled aria-label="Add point"><svg><use href="#addpt"/></svg></button><button disabled aria-label="Vertex tool"><svg><use href="#vertex"/></svg></button><button disabled class="drop" aria-label="Vertex options"><svg><use href="#tri"/></svg></button><button disabled aria-label="Modify attributes"><svg><use href="#multi"/></svg></button><button disabled aria-label="Delete"><svg><use href="#trash"/></svg></button><button disabled aria-label="Cut"><svg><use href="#cut"/></svg></button><button disabled aria-label="Copy"><svg><use href="#copy"/></svg></button><button disabled aria-label="Paste"><svg><use href="#paste"/></svg></button><button disabled aria-label="Undo"><svg><use href="#undo"/></svg></button><button disabled aria-label="Redo"><svg><use href="#redo"/></svg></button></div>
  <div class="group"><button aria-label="Data sources"><svg><use href="#dsm"/></svg></button><button aria-label="New GeoPackage"><svg><use href="#gpkg"/></svg></button><button aria-label="New vector layer"><svg><use href="#newvec"/></svg></button><button aria-label="New SpatiaLite"><svg><use href="#newlite"/></svg></button><button aria-label="New scratch layer"><svg><use href="#chip"/></svg></button><i class="sep"></i><button aria-label="New virtual layer"><svg><use href="#newvirt"/></svg></button></div>
  <div class="group"><button disabled aria-label="Labels"><svg viewBox="0 0 24 24"><path d="M1.500 9.500L6 4.500h16.500v10H6z" fill="#ddd8c6" stroke="#888"/><text x="5" y="13" class="glyph" font-size="8" font-weight="bold">abc</text></svg></button><button disabled aria-label="Diagrams"><svg><use href="#diag"/></svg></button><i class="sep"></i><button aria-label="Pinned labels"><svg viewBox="0 0 24 24"><path d="M1.500 9L6 3.500h15.500v11H6z" fill="#e6f1fb" stroke="#3f97ee" stroke-width="1.500"/><text x="6" y="12" class="glyph" font-size="9" font-weight="bold">ab</text><circle cx="19" cy="19" r="4.500" fill="#9e2b25" stroke="#6d1713"/><path d="M18 8v8" stroke="#bbb" stroke-width="3"/></svg></button><button aria-label="Unplaced labels"><svg viewBox="0 0 24 24"><path d="M1.500 9.500L6 4.500h16.500v10H6z" fill="#ffe1e1" stroke="#f11" stroke-width="1.500"/><text x="5" y="13" class="glyph red" font-size="8" font-weight="bold">abc</text></svg></button><i class="sep"></i><button disabled aria-label="Pin labels"><svg viewBox="0 0 24 24"><path d="M1.500 9L6 3.500h15.500v11H6z" fill="#ddd8c6" stroke="#888"/><text x="6" y="12" class="glyph" font-size="9" font-weight="bold">ab</text><circle cx="19" cy="19" r="4" fill="#999" stroke="#777"/><path d="M18 8v8" stroke="#bbb" stroke-width="3"/></svg></button><button disabled aria-label="Show labels"><svg viewBox="0 0 24 24"><path d="M1.500 9L6 3.500h16.500v11H6z" fill="#ddd8c6" stroke="#888"/><text x="5" y="12" class="glyph" font-size="8" font-weight="bold">abc</text><ellipse cx="16" cy="18.500" rx="7" ry="4" fill="#eee" stroke="#777"/><circle cx="16" cy="18" r="2.500" fill="#777"/></svg></button><button disabled aria-label="Move label"><svg viewBox="0 0 24 24"><path d="M1.500 9L6 3.500h16.500v11H6z" fill="#ddd8c6" stroke="#888"/><text x="5" y="12" class="glyph" font-size="8" font-weight="bold">abc</text><path d="M13 13h11v11H13z" fill="#777"/><path d="M15 18.500h7M19 15l3 3.500-3 3.500" stroke="#fff" stroke-width="1.700" fill="none"/></svg></button><button class="more">»</button></div>
  <div class="group wide"><button aria-label="MetaSearch"><svg><use href="#metasearch"/></svg></button></div>
  <div class="group"><button aria-label="Python console"><svg><use href="#python"/></svg></button><button aria-label="Area"><svg viewBox="0 0 24 24"><path d="M.8 2.800h22.400v14.400H7l-5 4v-4H.8z" fill="#fff" stroke="#111" stroke-width="1.600"/><text x="4" y="12" font-size="7" font-weight="bold" font-family="DejaVu Sans, sans-serif" fill="#111">area</text></svg></button><button aria-label="Reload plugin"><svg><use href="#rotate"/></svg></button><button class="drop" aria-label="Reload options"><svg><use href="#tri"/></svg></button><button aria-label="Get WKT"><svg viewBox="0 0 24 24" class="letters"><text x="0" y="11" fill="#111">W</text><text x="7" y="17" fill="#e11">K</text><text x="15" y="22" fill="#111">T</text></svg></button><button aria-label="Profile"><svg><use href="#prism"/></svg></button><button aria-label="Information"><svg viewBox="0 0 24 24"><circle cx="9" cy="9" r="8.500" fill="#118a18"/><text x="6" y="15" fill="#fff" class="serif" font-style="italic" font-size="17">i</text><use href="#pointer"/></svg></button><button aria-label="Build"><svg><use href="#hammer"/></svg></button><button aria-label="Messages"><svg><use href="#dots"/></svg></button></div>
  <div class="group"><button aria-label="WKT"><svg viewBox="0 0 24 24"><circle cx="12" cy="12" r="12" fill="#2162c4"/><text x="12" y="16" text-anchor="middle" font-family="Liberation Sans, sans-serif" font-size="10" font-weight="bold" fill="#fff">WKT</text></svg></button></div>
  <div class="group"><button aria-label="Help contents"><svg viewBox="0 0 24 24"><path d="M2 1.500h20v21H2z" fill="#6c98cc" stroke="#273848"/><path d="M2 1.500h5v21H2z" fill="#2c3d4f"/><text x="11" y="17" class="serif" font-size="15" fill="#fff">?</text></svg></button></div>
  <div class="group"><button aria-label="Topology checker"><svg><use href="#topo"/></svg></button></div>
</div>

<div class="tools last">
  <div class="group"><button aria-label="Search"><svg><use href="#p1"/></svg></button></div>
  <div class="group spaced"><button aria-label="Tiles"><svg><use href="#p2"/></svg></button></div>
  <div class="group"><button aria-label="Clipper"><svg><use href="#p3"/></svg></button></div>
  <div class="group"><button aria-label="Flight"><svg><use href="#p4"/></svg></button></div>
  <div class="group"><button aria-label="Clusters"><svg><use href="#p5"/></svg></button></div>
  <div class="group"><button aria-label="Fire"><svg><use href="#p6"/></svg></button></div>
  <div class="group"><button aria-label="Spiral"><svg><use href="#p7"/></svg></button></div>
  <div class="group"><button aria-label="Mosaic"><svg><use href="#p8"/></svg></button></div>
  <div class="group"><button aria-label="Satellite"><svg><use href="#p9"/></svg></button></div>
  <div class="group"><button aria-label="Folder"><svg><use href="#p10"/></svg></button></div>
  <div class="group"><button aria-label="Classes"><svg><use href="#p11"/></svg></button></div>
  <div class="group"><button aria-label="Target"><svg><use href="#p12"/></svg></button><button aria-label="Marks"><svg><use href="#p13"/></svg></button></div>
  <div class="group far"><button aria-label="Sphere"><svg><use href="#p12"/></svg></button></div>
  <div class="group"><button aria-label="Archive"><svg><use href="#p10"/></svg></button></div>
</div>

<main class="work">
  <section class="dock">
    <div class="dockhead"><h2>Layers</h2><button aria-label="Float"><svg viewBox="0 0 11 11"><rect x=".5" y=".5" width="10" height="10" rx="2" fill="none" stroke="#666"/><path d="M4.500 4V2.500h4v4H7M2.500 4.500h4v4h-4z" fill="none" stroke="#555"/></svg></button><button aria-label="Close layers"><svg viewBox="0 0 11 11"><rect x=".5" y=".5" width="10" height="10" rx="2" fill="none" stroke="#666"/><path d="M3 3l5 5M8 3L3 8" stroke="#444" stroke-width="2"/></svg></button></div>
    <div class="docktools"><button aria-label="Styling"><svg><use href="#l1"/></svg></button><button aria-label="Add group"><svg><use href="#l2"/></svg></button><button aria-label="Map themes"><svg><use href="#l3"/></svg></button><button aria-label="Filter legend"><svg><use href="#l4"/></svg></button><button disabled aria-label="Filter expression"><svg viewBox="0 0 16 16"><text x="1" y="9" class="glyph" font-size="15">ε</text><path d="M8 8.500h7l-2.500 3v4h-2v-4z" fill="#aaa"/></svg></button><button disabled class="drop" aria-label="Filter options"><svg><use href="#tri"/></svg></button><button aria-label="Expand all"><svg><use href="#l6"/></svg></button><button aria-label="Collapse all"><svg><use href="#l7"/></svg></button><button aria-label="Remove layer"><svg><use href="#l8"/></svg></button></div>
    <div class="tree"></div>
    <div class="docktabs"><button class="cur">Layers</button><button>Browser</button><button>Value Tool</button></div>
  </section>
  <section class="canvas" aria-label="Map"></section>
</main>

<footer class="status">
  <label class="locate"><svg viewBox="0 0 14 14"><circle cx="5.500" cy="5.500" r="4" fill="none" stroke="#888" stroke-width="1.300"/><path d="M8.500 8.500l4 4" stroke="#888" stroke-width="1.500"/></svg><input type="text" placeholder="Type to locate (Ctrl+K)" aria-label="Locate"></label>
  <span class="ready">Ready</span>
  <label for="coord">Coordinate</label><input id="coord" class="coord" type="text" value="86.38,-45.05">
  <button class="mini" aria-label="Toggle extents"><svg viewBox="0 0 16 16"><path d="M2 3l5-2 6 8-2 4-5 1-4-4z" fill="#ddd" stroke="#222"/><path d="M2 3l9 10M5 1l8 9M1 8l6-6M4 11l7-7M11 4l4-3M12 9l3-1M1 14l3-2" stroke="#222" stroke-width="1.300"/></svg></button>
  <label class="lscale" for="scale">Scale</label><span class="combo"><select id="scale"><option>1:28499762</option></select><i><svg><use href="#tri"/></svg></i></span>
  <button class="mini lock" aria-label="Lock scale"><svg viewBox="0 0 16 16"><path d="M4.500 8V4c0-4 7-4 7 0v4" fill="none" stroke="#666" stroke-width="1.500"/><rect x="2" y="7" width="12" height="8" rx="1" fill="#606060"/></svg></button>
  <label for="mag">Magnifier</label><span class="spin mag"><input id="mag" type="text" value="100%"><span><button aria-label="Increase magnifier"><svg><use href="#triup"/></svg></button><button aria-label="Decrease magnifier"><svg><use href="#tri"/></svg></button></span></span>
  <label class="lrot" for="rot">Rotation</label><span class="spin"><input id="rot" type="text" value="0.0 °"><span><button aria-label="Increase rotation"><svg><use href="#triup"/></svg></button><button aria-label="Decrease rotation"><svg><use href="#tri"/></svg></button></span></span>
  <label class="render"><input type="checkbox" checked><svg viewBox="0 0 14 14"><path d="M3 7l3 4 5-9" fill="none" stroke="#111" stroke-width="2"/></svg>Render</label>
  <button class="crs"><svg viewBox="0 0 16 16"><path d="M8 1l6 4v6l-6 4-6-4V5z" fill="#bbb" stroke="#777"/><path d="M0 8h16M8 1v14M3 4.500h10M3 11.500h10M5 3c-2 4-2 6 0 10M11 3c2 4 2 6 0 10" stroke="#777" fill="none"/></svg>EPSG:4326</button>
  <button class="mini msg" aria-label="Messages log"><svg viewBox="0 0 16 16"><path d="M8 1.500c10 0 10 11 5 11l1 3-5-2.500C-2 13-2 1.500 8 1.500z" fill="#555"/><path d="M3.500 7.500h2M7 7.500h2M10.500 7.500h2" stroke="#fff" stroke-width="2"/></svg></button>
</footer>

<div class="dialog" role="dialog" aria-labelledby="dlg">
  <div class="dtitle"><i class="pin"></i><h2 id="dlg">To Test Things</h2><div class="wbtns"><button aria-label="Minimize dialog"><svg><use href="#wmin"/></svg></button><button aria-label="Maximize dialog"><svg><use href="#wmax"/></svg></button><button aria-label="Close dialog"><svg><use href="#wclose"/></svg></button></div></div>
  <div class="dbody">
    <div class="dtabs" role="tablist"><button role="tab">Tab 1</button><button role="tab" class="cur" aria-selected="true">Tab 2</button></div>
    <div class="pane" role="tabpanel"><p>another test</p></div>
    <div class="actions"><button>OK</button><button class="default">Cancel</button></div>
  </div>
  <div class="mark"></div>
</div>
</body>
</html>
```
FILE: styles.css
```css
* { box-sizing: border-box; }
body { margin: 0; min-height: 100vh; display: flex; flex-direction: column; position: relative; background: #eee; color: #111; font: 14px/20px "Noto Sans", sans-serif; overflow: hidden; }
button, input, select { font: inherit; color: inherit; margin: 0; padding: 0; border: 0; background: none; }
button { display: flex; align-items: center; justify-content: center; }
svg { display: block; flex: none; }
h1, h2, p { margin: 0; font-size: 14px; font-weight: 500; }
i { font-style: normal; }
.defs { position: absolute; width: 0; height: 0; }
.glyph { font-family: "Noto Sans", sans-serif; fill: #444; }
.glyph.red { fill: #e11111; }
.serif { font-family: "Liberation Serif", serif; font-weight: bold; }
.letters { font: bold 15px "Liberation Sans", sans-serif; }

.panel { height: 26px; flex: none; display: flex; align-items: center; gap: 12px; padding: 0 4px 0 11px; background: #d5d5d5; border-bottom: 2px solid #868686; color: #2c2c2c; }
.panel .ic { width: 24px; height: 24px; }
.tray { margin-left: auto; display: flex; align-items: center; gap: 6px; }
.tray .ic { width: 20px; height: 22px; }
.tray .pad { margin-left: 3px; }
.blocks { width: 4px; height: 16px; background: repeating-linear-gradient(#bbb 0 4px, transparent 4px 6px); }
.kbd { color: #3c5a98; font-weight: 600; }

.titlebar { height: 30px; flex: none; display: flex; align-items: center; padding: 0 11px 0 13px; background: linear-gradient(#d6d6d6, #c8c8c8); }
.titlebar h1 { color: #858585; }
.titlebar h1, .dtitle h2 { flex: 1; text-align: center; padding-left: 15px; }
.titlebar .wbtns { margin-bottom: 6px; gap: 13px; }
.pin { width: 8px; height: 8px; border-radius: 4px; background: #f8f8f8; border: 1px solid #bbb; }
.wbtns { display: flex; gap: 12px; }
.wbtns button { width: 16px; height: 16px; border-radius: 8px; background: linear-gradient(#fafafa, #dcdcdc); box-shadow: 0 0 0 1px #aaa; }
.wbtns svg { width: 16px; height: 16px; }

.menubar { height: 24px; flex: none; display: flex; padding-left: 4px; border-bottom: 1px solid #ccc; }
.menubar button { padding: 0 8px; }
u { text-underline-offset: 3px; text-decoration-thickness: 1px; }

.tools { height: 39px; flex: none; display: flex; background: linear-gradient(#fafafa, #ececec); border-bottom: 1px solid #b4b4b4; }
.tools.last { height: 38px; }
.group { display: flex; align-items: center; }
.group::before { content: ""; width: 4px; height: 18px; margin: 0 4px 0 8px; background: radial-gradient(circle at 1px 1px, #b4b4b4 0 1px, transparent 1px) 0 0 / 3px 3px; }
.group:first-child::before { margin-left: 4px; }
.group button { width: 33px; height: 31px; }
.group svg { width: 24px; height: 24px; }
.group .on { background: #dcdcdc; border: 1px solid #aaa; border-radius: 3px; }
button:disabled svg { opacity: .38; filter: grayscale(.5); }
.group .drop, .docktools .drop { width: 12px; }
.group .drop svg, .docktools .drop svg { width: 8px; height: 5px; }
.sep { width: 1px; height: 28px; margin: 0 1px 0 4px; background: #ccc; }
.group .more { width: 30px; justify-content: flex-end; font-weight: 600; }
.wide { margin-right: 9px; }
.spaced { margin-right: 7px; }
.far { margin-left: 49px; }

.work { flex: 1; display: flex; gap: 6px; }
.dock { width: 435px; flex: none; display: flex; flex-direction: column; }
.dockhead { display: flex; align-items: center; gap: 3px; height: 23px; padding: 1px 2px 0 4px; }
.dockhead h2 { flex: 1; font-weight: 400; }
.dockhead svg { width: 11px; height: 11px; }
.docktools { display: flex; align-items: center; height: 28px; padding-left: 3px; margin-bottom: 2px; }
.docktools button { width: 25px; height: 24px; }
.docktools svg { width: 16px; height: 16px; }
.tree { flex: 1; background: #fff; border: 1px solid #b0b0b0; }
.docktabs { display: flex; align-items: flex-start; height: 30px; margin-top: 1px; border-top: 1px solid #b0b0b0; }
.docktabs button { height: 27px; padding: 0 13px; background: #dcdcdc; border: 1px solid #b0b0b0; border-width: 0 1px 1px 0; border-radius: 0 0 3px 3px; }
.docktabs .cur { height: 29px; padding: 0 12px; background: #f4f4f4; border-left-width: 1px; }
.canvas { flex: 1; margin-top: 1px; background: #fff; border: 1px solid #b0b0b0; }

.status { height: 32px; flex: none; display: flex; align-items: center; padding: 1px 7px 0 4px; font-size: 11px; }
.status input, .status select { font-size: 12px; }
.locate { display: flex; align-items: center; gap: 6px; width: 270px; height: 27px; padding-left: 8px; background: #fff; border: 1px solid #aaa; border-radius: 3px; }
.locate svg { width: 14px; height: 14px; }
.status .locate input { flex: 1; min-width: 0; font-size: 14px; outline: 0; }
.locate input::placeholder { color: #7c7c7c; opacity: 1; }
.ready { margin: 0 auto 0 8px; }
.status .coord { width: 96px; height: 23px; margin: 0 5px 0 4px; text-align: center; background: #fff; border: 1px solid #aaa; border-radius: 3px; }
.mini svg { width: 16px; height: 16px; }
.lscale { margin: 0 5px 0 13px; }
.combo, .spin { display: flex; position: relative; height: 27px; background: #fff; border: 1px solid #aaa; border-radius: 3px; }
.combo select { width: 100px; padding-left: 3px; appearance: none; }
.combo i { position: absolute; right: 0; top: 0; width: 20px; height: 25px; display: grid; place-items: center; background: #f2f2f2; border-left: 1px solid #aaa; pointer-events: none; }
.combo svg, .spin svg { width: 7px; height: 4px; }
.lock { margin: 0 7px 0 10px; }
.spin { width: 97px; margin-left: 10px; }
.spin.mag { width: 101px; margin-left: 4px; }
.spin input { flex: 1; min-width: 0; padding-left: 4px; }
.spin > span { width: 15px; display: grid; align-content: center; gap: 6px; background: #f2f2f2; border-left: 1px solid #aaa; }
.lrot { margin-left: 9px; }
.render { display: grid; grid-template-columns: 14px auto; column-gap: 6px; align-items: center; margin-left: 5px; }
.render input { appearance: none; width: 14px; height: 14px; grid-area: 1 / 1; background: #fff; border: 1px solid #bbb; }
.render svg { width: 14px; height: 14px; grid-area: 1 / 1; }
.crs { gap: 4px; margin: 0 20px 0 19px; font-size: 12px; }
.crs svg { width: 16px; height: 16px; }

.dialog { position: absolute; left: 435px; top: 166px; width: 412px; padding: 0 5px 5px; background: #d4d4d4; border: 1px solid #666; border-radius: 5px 5px 0 0; box-shadow: 2px 5px 16px 2px rgba(0, 0, 0, .55); }
.dtitle { height: 30px; display: flex; align-items: center; padding: 0 6px; }
.dtitle h2 { font-weight: 600; color: #414141; padding-top: 2px; }
.dtitle > .pin, .dtitle .wbtns { margin-bottom: 4px; }
.dbody { background: #eee; padding: 10px 19px 29px 30px; }
.dtabs { display: flex; align-items: flex-end; height: 29px; }
.dtabs button { width: 60px; height: 28px; background: #e8e8e8; border: 1px solid #aaa; border-right: 0; border-bottom: 0; border-radius: 3px 0 0 0; }
.dtabs .cur { width: 61px; height: 30px; margin-bottom: -1px; background: #fff; border-right: 1px solid #aaa; border-radius: 3px 3px 0 0; position: relative; }
.pane { height: 331px; background: #fdfdfd; border: 1px solid #aaa; padding: 31px 11px; }
.pane p { font-weight: 400; }
.actions { display: flex; justify-content: flex-end; gap: 12px; padding: 30px 3px 0 0; }
.actions button { width: 88px; height: 27px; background: linear-gradient(#fff, #ececec); border: 1px solid #aaa; border-radius: 3px; }
.actions .default { background: linear-gradient(#fff, #d9e2ea); border-color: #236a9e; }
.mark { position: absolute; left: 17px; top: 82px; width: 154px; height: 59px; border: 4px solid #f00000; }
```
